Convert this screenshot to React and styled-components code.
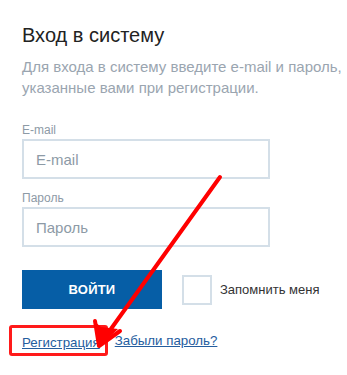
import React from 'react';
import styled, { createGlobalStyle } from 'styled-components';

const GlobalStyle = createGlobalStyle`
  html, body {
    margin: 0;
    padding: 0;
    background: #fff;
  }

  body {
    font-family: "Liberation Sans", Arial, sans-serif;
  }
`;

const Page = styled.div`
  position: relative;
  width: 347px;
  height: 375px;
  padding: 23px 0 0 22px;
  box-sizing: border-box;
  overflow: hidden;
`;

const Title = styled.h1`
  margin: 0;
  font-size: 20px;
  font-weight: 400;
  line-height: 24px;
  color: #222;
`;

const Subtitle = styled.p`
  margin: 9px 0 0;
  font-size: 15px;
  line-height: 21px;
  color: #9aa5b0;
  white-space: nowrap;
`;

const Form = styled.form`
  display: flex;
  flex-direction: column;
  margin-top: 25px;
`;

const Field = styled.label`
  display: flex;
  flex-direction: column;
  gap: 2px;

  & + & {
    margin-top: 12px;
  }
`;

const FieldLabel = styled.span`
  font-size: 12px;
  line-height: 14px;
  color: #8d9aa6;
`;

const Input = styled.input`
  width: 248px;
  height: 40px;
  box-sizing: border-box;
  padding: 0 12px;
  border: 2px solid #d4dfe8;
  border-radius: 0;
  outline: none;
  font-family: inherit;
  font-size: 15px;
  color: #333;
  background: #fff;

  &::placeholder {
    color: #8d9aa6;
  }
`;

const Actions = styled.div`
  display: flex;
  align-items: center;
  margin-top: 23px;
`;

const SubmitButton = styled.button`
  width: 140px;
  height: 39px;
  border: 0;
  border-radius: 0;
  padding: 0;
  cursor: pointer;
  background-color: #065ea6;
  color: #fff;
  font-family: inherit;
  font-size: 13px;
  font-weight: 700;
  letter-spacing: 0.2px;
`;

const Remember = styled.label`
  display: inline-flex;
  align-items: center;
  gap: 8px;
  margin-left: 20px;
  font-size: 13px;
  color: #333;
  cursor: pointer;
`;

const CheckBox = styled.span`
  display: inline-block;
  width: 30px;
  height: 30px;
  box-sizing: border-box;
  border: 2px solid #d4dfe8;
  background: #fff;
`;

const Links = styled.div`
  display: flex;
  gap: 15px;
  margin-top: 24px;
`;

const LinkWrap = styled.span`
  position: relative;
  display: inline-block;
`;

const TextLink = styled.a`
  font-size: 13.3px;
  line-height: 16px;
  color: #245d9e;
  text-decoration: underline;
`;

/* красная рамка-пометка поверх ссылки */
const Highlight = styled.span`
  position: absolute;
  left: -13px;
  top: -8px;
  right: -8px;
  bottom: -5px;
  border: 3px solid #ff1a1a;
  border-radius: 3px;
  pointer-events: none;
`;

const Annotation = styled.svg`
  position: absolute;
  left: 0;
  top: 0;
  width: 347px;
  height: 375px;
  pointer-events: none;
`;

export default function App() {
  return (
    <>
      <GlobalStyle />
      <Page>
        <Title>Вход в систему</Title>
        <Subtitle>
          Для входа в систему введите e-mail и пароль,
          <br />
          указанные вами при регистрации.
        </Subtitle>

        <Form onSubmit={e => e.preventDefault()}>
          <Field>
            <FieldLabel>E-mail</FieldLabel>
            <Input type="text" placeholder="E-mail" />
          </Field>
          <Field>
            <FieldLabel>Пароль</FieldLabel>
            <Input type="password" placeholder="Пароль" />
          </Field>

          <Actions>
            <SubmitButton type="submit">ВОЙТИ</SubmitButton>
            <Remember>
              <CheckBox />
              Запомнить меня
            </Remember>
          </Actions>
        </Form>

        <Links>
          <LinkWrap>
            <TextLink href="#">Регистрация</TextLink>
            <Highlight />
          </LinkWrap>
          <TextLink href="#">Забыли пароль?</TextLink>
        </Links>

        <Annotation viewBox="0 0 347 375">
          <line x1="220" y1="177" x2="103" y2="340" stroke="#ff0000" strokeWidth="4" strokeLinecap="round" />
          <polygon points="99,347 94,321 101,327 118,329" fill="#ff0000" />
          <polyline points="95,321 99,346 120,331" fill="none" stroke="#ff0000" strokeWidth="4" strokeLinejoin="round" strokeLinecap="round" />
        </Annotation>
      </Page>
    </>
  );
}
